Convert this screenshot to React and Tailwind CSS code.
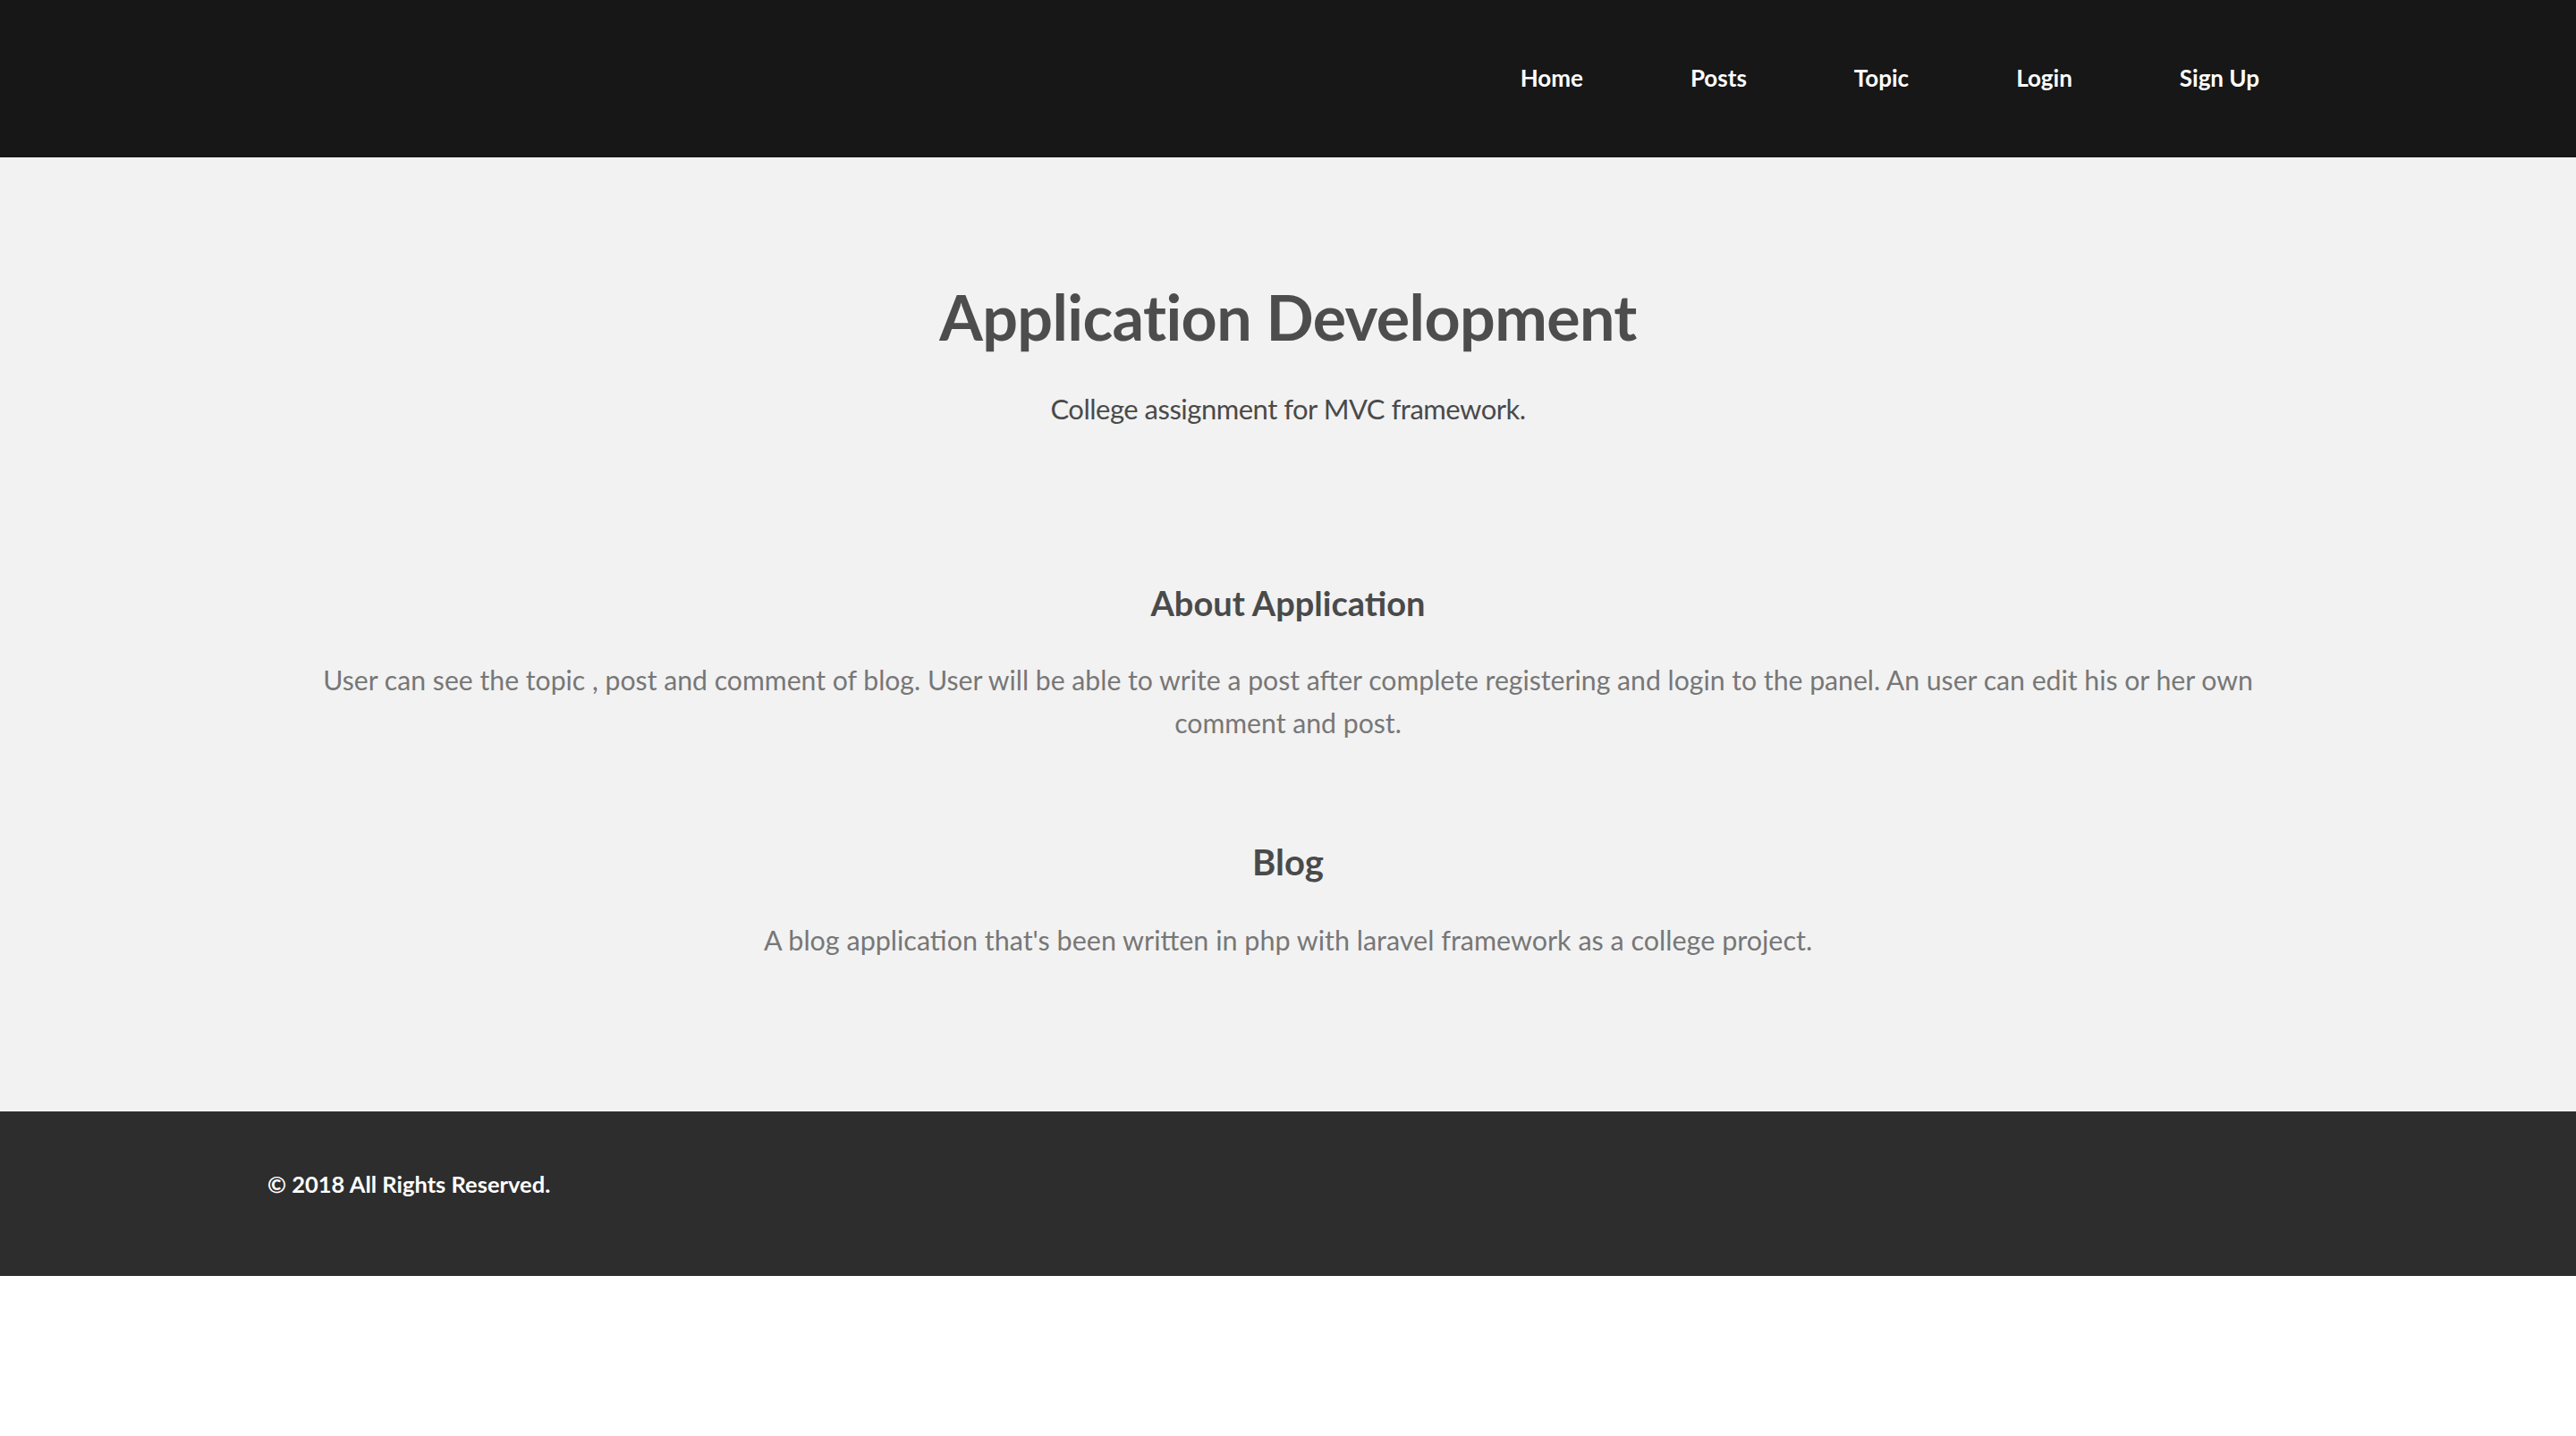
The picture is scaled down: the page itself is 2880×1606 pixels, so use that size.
export default function App() {
  const links = ["Home", "Posts", "Topic", "Login", "Sign Up"];

  return (
    <div className="min-h-screen bg-white font-['Lato',sans-serif]">
      <header className="flex h-[176px] items-center bg-[#171717] pb-[2px]">
        <nav className="mx-auto flex w-[2292px] justify-end">
          {links.map((link) => (
            <a
              key={link}
              href="#"
              className="px-[60px] text-[26px] font-bold leading-[36px] text-white"
            >
              {link}
            </a>
          ))}
        </nav>
      </header>

      <main className="bg-[#f2f2f2] pb-[168px] pt-[138px] text-center">
        <div className="mx-auto w-[2282px]">
          <h1 className="text-[70px] font-bold leading-[80px] tracking-[-0.6px] text-[#4d4d4d]">
            Application Development
          </h1>
          <p className="mt-[39px] text-[31px] leading-[48px] tracking-[-0.5px] text-[#4a4a4a]">
            College assignment for MVC framework.
          </p>

          <h3 className="mt-[169px] text-[38px] font-bold leading-[48px] text-[#4a4a4a]">
            About Application
          </h3>
          <p className="mt-[38px] text-[30.2px] leading-[48px] text-[#777777]">
            User can see the topic , post and comment of blog. User will be able
            to write a post after complete registering and login to the panel.
            An user can edit his or her own comment and post.
          </p>

          <h3 className="mt-[108px] text-[40px] font-bold leading-[48px] text-[#4a4a4a]">
            Blog
          </h3>
          <p className="mt-[39px] text-[30.5px] leading-[48px] text-[#777777]">
            A blog application that's been written in php with laravel
            framework as a college project.
          </p>
        </div>
      </main>

      <footer className="flex h-[184px] items-center bg-[#2d2d2d] pb-[22px]">
        <div className="mx-auto w-[2282px]">
          <p className="text-[25.5px] font-bold leading-[36px] text-white">
            © 2018 All Rights Reserved.
          </p>
        </div>
      </footer>
    </div>
  );
}
